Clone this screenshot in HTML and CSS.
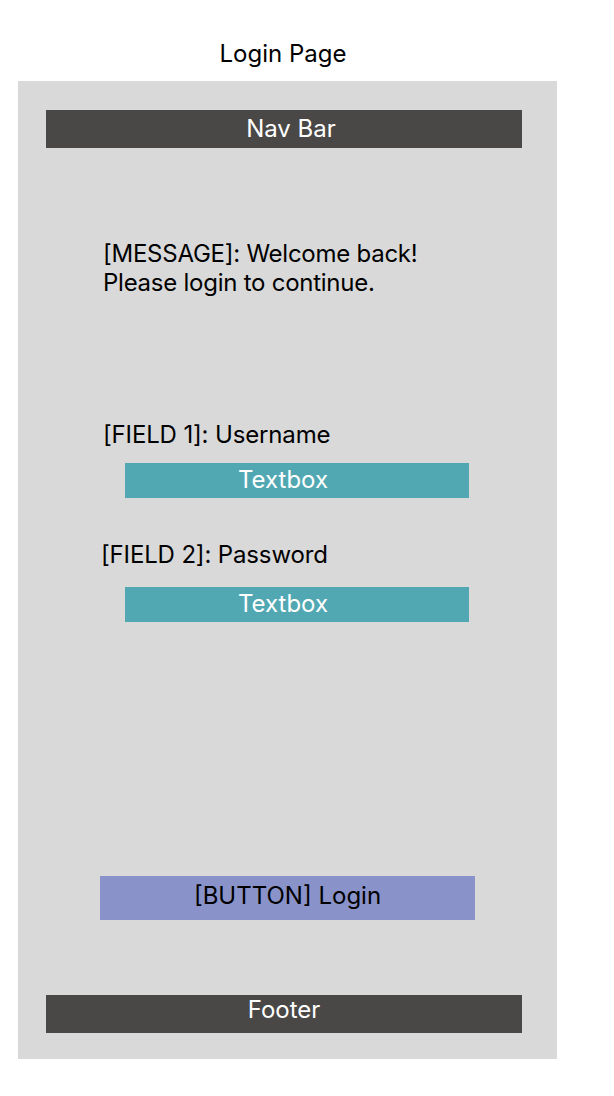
FILE: index.html
```html
<!DOCTYPE html>
<html>
<head>
<meta charset="utf-8">
<link rel="stylesheet" href="styles.css">
</head>
<body>
<div class="title">Login Page</div>
<div class="panel">
  <div class="bar nav">Nav Bar</div>
  <div class="message">[MESSAGE]: Welcome back!<br>Please login to continue.</div>
  <div class="label label-1">[FIELD 1]: Username</div>
  <div class="textbox textbox-1">Textbox</div>
  <div class="label label-2">[FIELD 2]: Password</div>
  <div class="textbox textbox-2">Textbox</div>
  <div class="button">[BUTTON] Login</div>
  <div class="bar footer">Footer</div>
</div>
</body>
</html>
```
FILE: styles.css
```css
* { box-sizing: border-box; }
body {
  margin: 0;
  background: #ffffff;
  font-family: Inter, "Noto Sans", sans-serif;
  font-size: 24px;
  color: #000000;
}
.title {
  width: 566px;
  height: 81px;
  padding-top: 39px;
  line-height: 29px;
  text-align: center;
}
.panel {
  margin-left: 18px;
  width: 539px;
  height: 978px;
  background: #d9d9d9;
  padding: 29px 35px 0 28px;
  display: flex;
  flex-direction: column;
  align-items: flex-start;
}
.bar {
  width: 476px;
  height: 38px;
  background: #494846;
  color: #ffffff;
  line-height: 38px;
  text-align: center;
}
.nav { padding-left: 14px; }
.footer {
  margin-top: 75px;
  line-height: 30px;
}
.message {
  margin-top: 91px;
  margin-left: 57px;
  line-height: 29px;
  letter-spacing: -0.25px;
}
.label {
  line-height: 29px;
  letter-spacing: -0.15px;
}
.label-1 { margin-top: 123px; margin-left: 57px; }
.label-2 { margin-top: 42px; margin-left: 55px; }
.textbox {
  margin-left: 79px;
  width: 344px;
  height: 35px;
  background: #52a8b2;
  color: #ffffff;
  line-height: 34px;
  text-align: center;
  padding-right: 28px;
}
.textbox-1 { margin-top: 14px; }
.textbox-2 { margin-top: 18px; }
.button {
  margin-top: 254px;
  margin-left: 54px;
  width: 375px;
  height: 44px;
  background: #8993c9;
  line-height: 39px;
  padding-bottom: 5px;
  text-align: center;
}
```
